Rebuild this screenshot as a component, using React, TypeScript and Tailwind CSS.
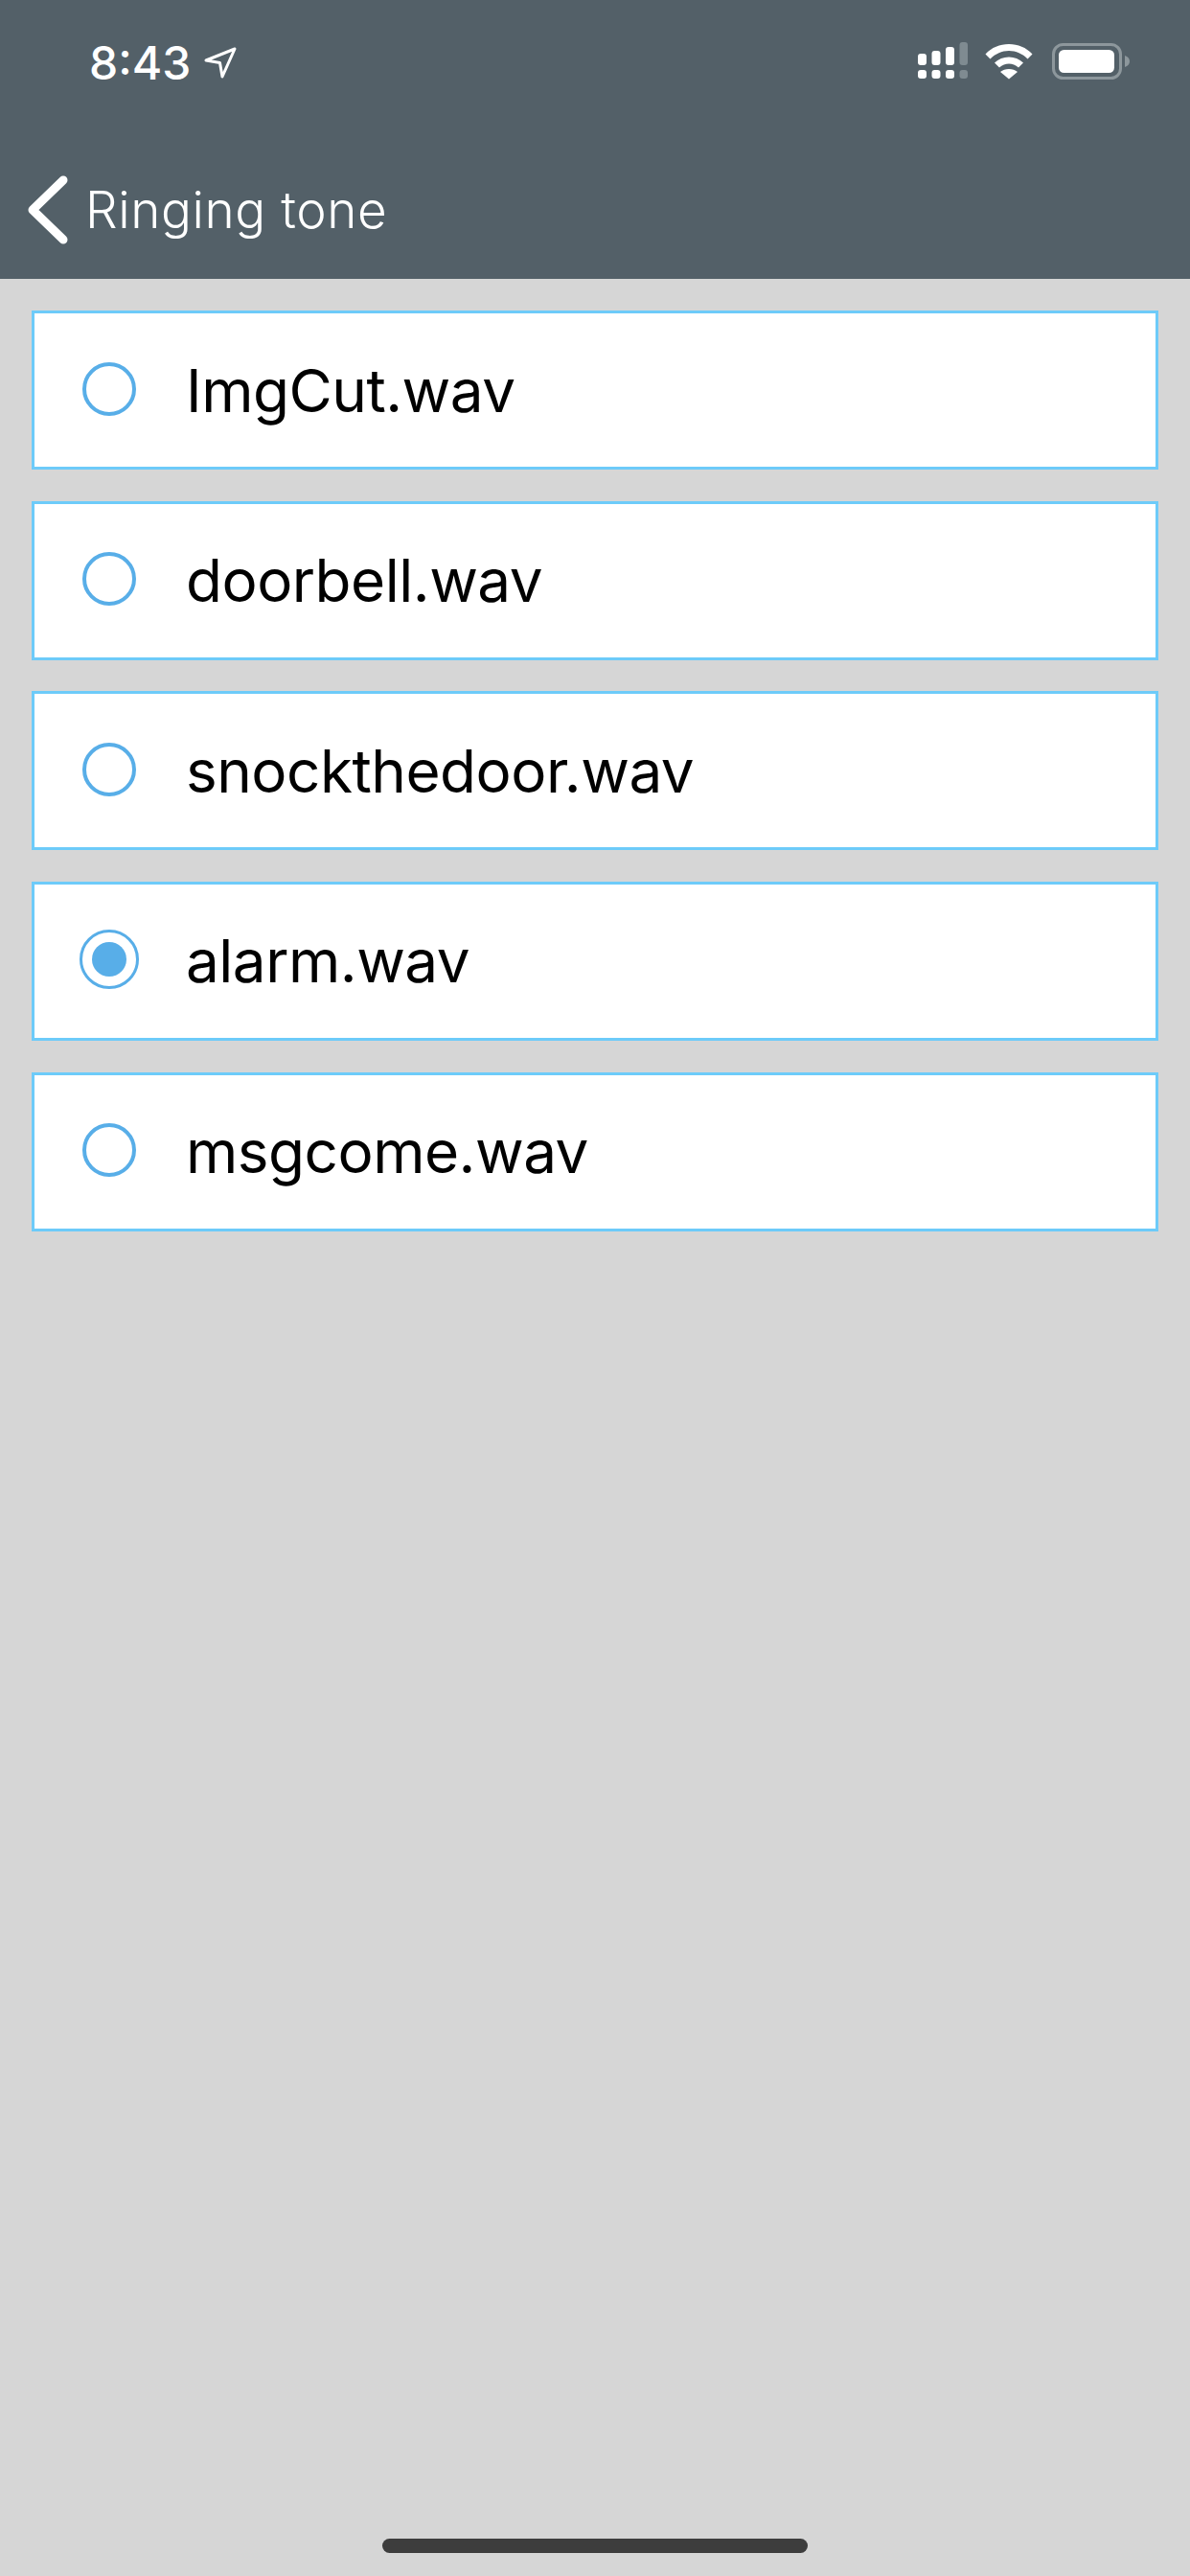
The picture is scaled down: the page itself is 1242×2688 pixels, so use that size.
const tones = ['ImgCut.wav', 'doorbell.wav', 'snockthedoor.wav', 'alarm.wav', 'msgcome.wav'];
const selected = 'alarm.wav';

const SignalIcon = () => (
  <svg width="52" height="40" viewBox="0 0 52 40" fill="#fff">
    <rect x="0" y="12" width="9" height="12" rx="3" />
    <rect x="14.500" y="9" width="9" height="15" rx="3" />
    <rect x="29" y="5" width="9" height="19" rx="3" />
    <rect x="43.500" y="0" width="8.500" height="24" rx="3" fill="#7f8b91" />
    <rect x="0" y="29" width="9" height="9" rx="3" />
    <rect x="14.500" y="29" width="9" height="9" rx="3" />
    <rect x="29" y="29" width="9" height="9" rx="3" />
    <rect x="43.500" y="29" width="8.500" height="9" rx="3" fill="#7f8b91" />
  </svg>
);

const WifiIcon = () => (
  <svg width="50" height="38" viewBox="0 0 50 38" fill="#fff">
    <path d="M0.500 11.500C7 4.500 15.500 1 25 1C34.500 1 43 4.500 49.500 11.500L44.500 16.500C39 11 32.500 8 25 8C17.500 8 11 11 5.500 16.500Z" />
    <path d="M10 20.500C14 16.500 19.500 14.500 25 14.500C30.500 14.500 36 16.500 40 20.500L35 25.500C32 23 28.500 21.500 25 21.500C21.500 21.500 18 23 15 25.500Z" />
    <path d="M16 30C18.500 28 21.500 27 25 27C28.500 27 31.500 28 34 30L25 37.500Z" />
  </svg>
);

const BatteryIcon = () => (
  <svg width="82" height="38" viewBox="0 0 82 38">
    <rect x="1.500" y="1.500" width="70" height="35" rx="10" fill="none" stroke="#8d979c" strokeWidth="3" />
    <rect x="7" y="7" width="58" height="24" rx="5.500" fill="#fff" />
    <path d="M76 13C79 14 81 16 81 19C81 22 79 24 76 25Z" fill="#8d979c" />
  </svg>
);

const LocationIcon = () => (
  <svg width="34" height="34" viewBox="0 0 34 34" fill="none" stroke="#fff" strokeWidth="3" strokeLinejoin="round">
    <path d="M2 14L32 2L19 31L16.500 16.500Z" />
  </svg>
);

const BackIcon = () => (
  <svg width="44" height="74" viewBox="0 0 44 74" fill="none" stroke="#fff" strokeWidth="9" strokeLinecap="round" strokeLinejoin="round">
    <path d="M37 6L5 37L37 68" />
  </svg>
);

const Radio = ({ checked }: { checked: boolean }) =>
  checked ? (
    <span className="flex h-[62px] w-[62px] items-center justify-center rounded-full border-[3px] border-[#58aee8] bg-white">
      <span className="h-9 w-9 rounded-full bg-[#58aee8]" />
    </span>
  ) : (
    <span className="h-[56px] w-[56px] rounded-full border-[4px] border-[#58aee8] bg-white" />
  );

export default function App() {
  return (
    <div className="flex h-[2688px] w-[1242px] flex-col overflow-hidden bg-[#d6d6d6] font-['Inter',sans-serif]">
      <header className="h-[291px] shrink-0 bg-[#536068] text-white">
        <div className="flex h-[130px] items-start justify-between pl-[93px] pr-[62px] pt-[44px]">
          <div className="flex items-center gap-[14px]">
            <span className="text-[48px] font-medium leading-[44px]">8:43</span>
            <LocationIcon />
          </div>
          <div className="flex items-center">
            <SignalIcon />
            <span className="ml-[18px]">
              <WifiIcon />
            </span>
            <span className="ml-[20px]">
              <BatteryIcon />
            </span>
          </div>
        </div>
        <div className="flex items-center gap-[16px] pl-[29px] pt-[52px]">
          <BackIcon />
          <span className="text-[53px] font-light leading-[74px] tracking-[0.6px]">Ringing tone</span>
        </div>
      </header>

      <main className="flex flex-1 flex-col gap-[32.67px] px-[33px] pt-[33px]">
        {tones.map((tone) => (
          <div key={tone} className="flex h-[166px] items-center border-[3px] border-[#6dcbf9] bg-white pb-[3px] text-black">
            <span className="ml-[47px] flex w-[62px] shrink-0 items-center justify-center">
              <Radio checked={tone === selected} />
            </span>
            <span className="ml-[49px] mt-[4px] text-[62px] leading-none tracking-[-0.5px]">{tone}</span>
          </div>
        ))}
      </main>

      <footer className="flex h-[50px] shrink-0 justify-center pt-[11px]">
        <div className="h-[15px] w-[444px] rounded-full bg-[#3d3d3d]" />
      </footer>
    </div>
  );
}
